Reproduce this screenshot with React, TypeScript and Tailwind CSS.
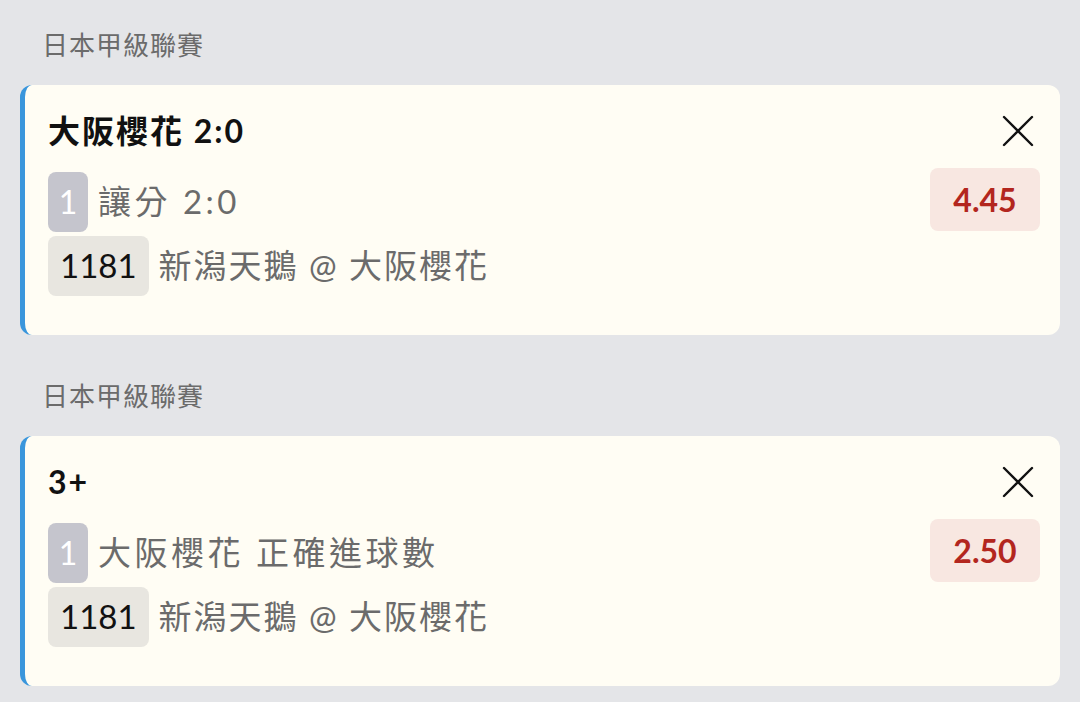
import React from 'react';

interface BetSlip {
  league: string;
  title: string;
  leg: string;
  selection: string;
  matchNo: string;
  match: string;
  odds: string;
}

const slips: BetSlip[] = [
  {
    league: '日本甲級聯賽',
    title: '大阪櫻花 2:0',
    leg: '1',
    selection: '讓分 2:0',
    matchNo: '1181',
    match: '新潟天鵝 @ 大阪櫻花',
    odds: '4.45',
  },
  {
    league: '日本甲級聯賽',
    title: '3+',
    leg: '1',
    selection: '大阪櫻花 正確進球數',
    matchNo: '1181',
    match: '新潟天鵝 @ 大阪櫻花',
    odds: '2.50',
  },
];

function CloseIcon() {
  return (
    <svg width="32" height="32" viewBox="0 0 32 32" fill="none">
      <path d="M2 2 30 30M30 2 2 30" stroke="#111" strokeWidth="2.4" strokeLinecap="round" />
    </svg>
  );
}

function SlipCard({ slip }: { slip: BetSlip }) {
  return (
    <section className="flex flex-col">
      <div className="h-10 flex items-center pl-[42px] text-[26px] leading-10 tracking-[1px] text-[#6b6b6b]">
        {slip.league}
      </div>
      <div className="mt-5 mx-5 h-[250px] flex bg-[#fffdf4] rounded-xl border-l-[5px] border-[#3a96dc] pl-[23px] pr-5 pt-[24px]">
        <div className="flex-1 flex flex-col">
          <div className="h-11 flex items-center text-[32px] font-bold text-[#111] leading-none tracking-[2px]">
            {slip.title}
          </div>
          <div className="mt-[19px] flex items-center h-[60px]">
            <span className="w-10 h-[60px] rounded-lg bg-[#c5c5cd] text-white text-[32px] flex items-center justify-center">
              {slip.leg}
            </span>
            <span className="ml-[10px] text-[33px] tracking-[3.5px] text-[#6b6b6b]">{slip.selection}</span>
          </div>
          <div className="mt-1 flex items-center h-[60px]">
            <span className="px-3 h-[60px] rounded-lg bg-[#e8e6e0] text-[#111] text-[33px] flex items-center">
              {slip.matchNo}
            </span>
            <span className="ml-[10px] text-[33px] tracking-[2px] text-[#6b6b6b]">{slip.match}</span>
          </div>
        </div>
        <div className="flex flex-col items-end">
          <button className="w-11 h-11 flex items-center justify-center">
            <CloseIcon />
          </button>
          <div className="mt-[15px] w-[110px] h-[63px] rounded-lg bg-[#f8e7e1] text-[#b3261e] text-[32px] font-bold flex items-center justify-center">
            {slip.odds}
          </div>
        </div>
      </div>
    </section>
  );
}

export default function App() {
  return (
    <div
      className="w-[1080px] h-[702px] overflow-hidden bg-[#e4e5e8] pt-[25px] flex flex-col gap-[41px]"
      style={{ fontFamily: "Lato, 'Noto Sans CJK TC', sans-serif" }}
    >
      {slips.map((s, i) => (
        <SlipCard key={i} slip={s} />
      ))}
    </div>
  );
}
